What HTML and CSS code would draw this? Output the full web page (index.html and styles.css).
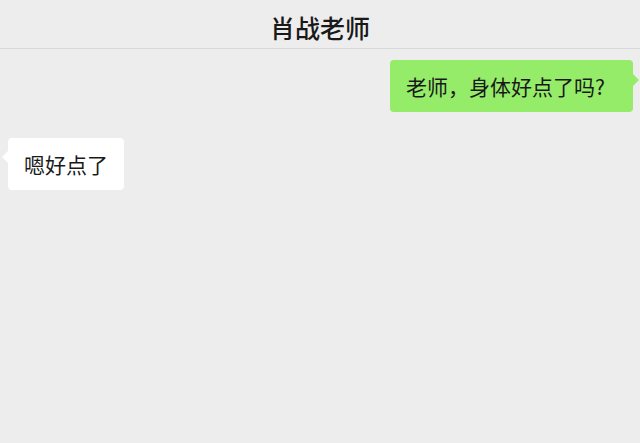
FILE: index.html
```html
<!DOCTYPE html>
<html lang="zh">
<head>
    <meta charset="UTF-8">
    <title>肖战老师</title>
    <link rel="stylesheet" href="styles.css">
</head>
<body>
    <div class="header">肖战老师</div>
    <div class="chat">
        <div class="row row-me">
            <div class="bubble bubble-me">老师，身体好点了吗?</div>
        </div>
        <div class="row row-other">
            <div class="bubble bubble-other">嗯好点了</div>
        </div>
    </div>
</body>
</html>
```

FILE: styles.css
```css
body {
    margin: 0;
    padding: 0;
    background-color: #ededed;
    font-family: "Noto Sans CJK SC", "Noto Sans", sans-serif;
    color: #191919;
    height: 100vh;
}

.header {
    height: 42px;
    padding-top: 6px;
    line-height: 42px;
    text-align: center;
    font-size: 25px;
    font-weight: 500;
    border-bottom: 1px solid #d8d8d8;
}

.chat {
    display: flex;
    flex-direction: column;
    gap: 26px;
    padding: 11px 7px 0 8px;
}

.row {
    display: flex;
}

.row-me {
    justify-content: flex-end;
}

.row-other {
    justify-content: flex-start;
}

.bubble {
    position: relative;
    font-size: 21px;
    line-height: 30px;
    padding: 11px 16px 11px 16px;
    border-radius: 4px;
}

.bubble-me {
    background-color: #95ec69;
    padding-right: 28px;
}

.bubble-other {
    background-color: #ffffff;
}

.bubble-me::after {
    content: "";
    position: absolute;
    right: -6px;
    top: 14px;
    border-top: 6px solid transparent;
    border-bottom: 6px solid transparent;
    border-left: 6px solid #95ec69;
}

.bubble-other::before {
    content: "";
    position: absolute;
    left: -6px;
    top: 13px;
    border-top: 6px solid transparent;
    border-bottom: 6px solid transparent;
    border-right: 6px solid #ffffff;
}
```
